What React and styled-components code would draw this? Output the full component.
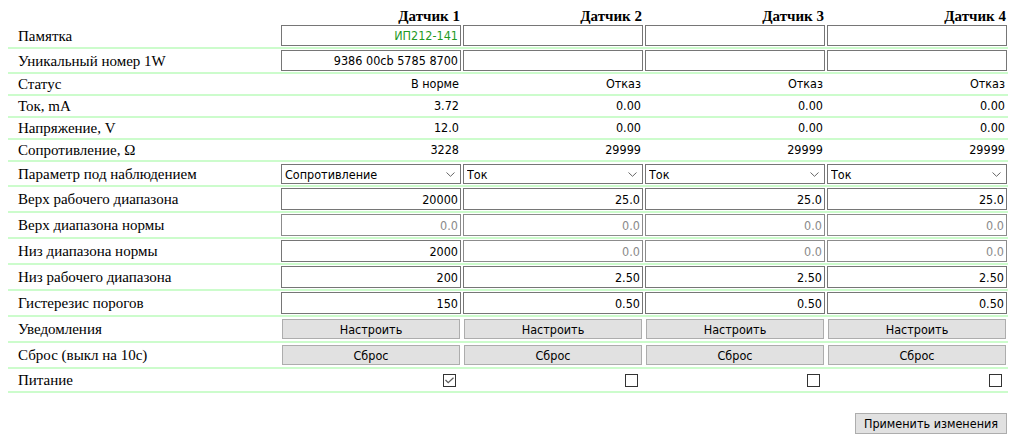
import React from "react";
import styled, { createGlobalStyle } from "styled-components";

const GlobalStyle = createGlobalStyle`
  body {
    margin: 8px;
    background: #fff;
    font-family: "Liberation Serif", "Times New Roman", serif;
    font-size: 15px;
    color: #000;
  }
`;

const sans = `"DejaVu Sans Condensed", "DejaVu Sans", Tahoma, sans-serif`;

const sensors = [
  {
    memo: "ИП212-141",
    uid: "9386 00cb 5785 8700",
    status: "В норме",
    current: "3.72",
    voltage: "12.0",
    resistance: "3228",
    param: "Сопротивление",
    workTop: "20000",
    normTop: "0.0",
    normBottom: "2000",
    workBottom: "200",
    hyst: "150",
    power: true,
    off: { normTop: true },
  },
  ...[1, 2, 3].map(() => ({
    memo: "",
    uid: "",
    status: "Отказ",
    current: "0.00",
    voltage: "0.00",
    resistance: "29999",
    param: "Ток",
    workTop: "25.0",
    normTop: "0.0",
    normBottom: "0.0",
    workBottom: "2.50",
    hyst: "0.50",
    power: false,
    off: { normTop: true, normBottom: true },
  })),
];

const Table = styled.table`
  width: 1000px;
  border-collapse: separate;
  border-spacing: 0;
  table-layout: fixed;
`;

const Label = styled.td`
  padding: 1px 1px 1px 10px;
  line-height: 18px;
  white-space: nowrap;
  border-bottom: 2px solid #ccfccc;
`;

const Head = styled.th`
  text-align: right;
  vertical-align: bottom;
  padding: 0 2px 0 0;
  font-weight: bold;
  height: 16px;
  line-height: 16px;
`;

const Cell = styled.td`
  padding: 1px;
  text-align: right;
  border-bottom: 2px solid #ccfccc;
`;

const Value = styled.td`
  padding: 1px 3px 1px 1px;
  text-align: right;
  line-height: 18px;
  font-family: ${sans};
  font-stretch: condensed;
  font-size: 12.5px;
  border-bottom: 2px solid #ccfccc;
`;

const Field = styled.input`
  box-sizing: border-box;
  display: block;
  width: 100%;
  height: ${(p) => (p.$short ? "21px" : "22px")};
  margin: 0;
  padding: 0 2px;
  border: 1px solid ${(p) => (p.disabled ? "#8c8c8c" : "#767676")};
  outline: none;
  text-align: right;
  font-family: ${sans};
  font-stretch: condensed;
  font-size: 12.5px;
  color: ${(p) => (p.$green ? "#1f9a1f" : p.disabled ? "#8a8a8a" : "#000")};
  -webkit-text-fill-color: ${(p) => (p.$green ? "#1f9a1f" : p.disabled ? "#8a8a8a" : "#000")};
  opacity: 1;
  background: #fff;
`;

const SelectWrap = styled.div`
  position: relative;
  height: 20px;
  margin: 1px 0 0;
`;

const Select = styled.select`
  box-sizing: border-box;
  display: block;
  width: 100%;
  height: 20px;
  margin: 0;
  padding: 0 20px 0 3px;
  border: 1px solid #767676;
  border-radius: 0;
  appearance: none;
  background: #fff;
  font-family: ${sans};
  font-stretch: condensed;
  font-size: 12.5px;
  color: #000;
`;

const Chevron = styled.svg`
  position: absolute;
  right: 6px;
  top: 8px;
  pointer-events: none;
`;

const Button = styled.button`
  box-sizing: border-box;
  display: block;
  width: ${(p) => p.$w || "calc(100% - 2px)"};
  height: ${(p) => p.$h || "20px"};
  margin: ${(p) => (p.$w ? "0" : "1px")};
  padding: 0;
  border: 1px solid #adadad;
  border-radius: 0;
  background: #e1e1e1;
  font-family: ${sans};
  font-stretch: condensed;
  font-size: 12.5px;
  color: #000;
`;

const Box = styled.span`
  display: inline-block;
  box-sizing: border-box;
  width: 13px;
  height: 13px;
  margin: 4px 5px 3px 0;
  border: 1px solid #333;
  background: #fff;
  vertical-align: middle;
`;

const Footer = styled.div`
  width: 999px;
  display: flex;
  justify-content: flex-end;
  padding-top: 20px;
`;

function Check({ on }) {
  return (
    <Box>
      {on && (
        <svg width="11" height="11" viewBox="0 0 11 11" style={{ display: "block" }}>
          <path d="M1.5 5 L4.2 7.7 L9.5 2.8" fill="none" stroke="#5a5a5a" strokeWidth="1.2" />
        </svg>
      )}
    </Box>
  );
}

function InputRow({ label, field, short }) {
  return (
    <tr>
      <Label>{label}</Label>
      {sensors.map((s, i) => (
        <Cell key={i}>
          <Field
            readOnly
            disabled={!!s.off[field]}
            defaultValue={s[field]}
            $green={field === "memo"}
            $short={short}
          />
        </Cell>
      ))}
    </tr>
  );
}

function ValueRow({ label, field }) {
  return (
    <tr>
      <Label>{label}</Label>
      {sensors.map((s, i) => (
        <Value key={i}>{s[field]}</Value>
      ))}
    </tr>
  );
}

function ButtonRow({ label, text }) {
  return (
    <tr>
      <Label>{label}</Label>
      {sensors.map((_, i) => (
        <Cell key={i}>
          <Button>{text}</Button>
        </Cell>
      ))}
    </tr>
  );
}

export default function App() {
  return (
    <>
      <GlobalStyle />
      <Table>
        <colgroup>
          <col style={{ width: 272 }} />
          <col style={{ width: 182 }} />
          <col style={{ width: 182 }} />
          <col style={{ width: 182 }} />
          <col style={{ width: 182 }} />
        </colgroup>
        <tbody>
          <tr>
            <th />
            {sensors.map((_, i) => (
              <Head key={i}>Датчик {i + 1}</Head>
            ))}
          </tr>
          <InputRow label="Памятка" field="memo" short />
          <InputRow label="Уникальный номер 1W" field="uid" short />
          <ValueRow label="Статус" field="status" />
          <ValueRow label="Ток, mA" field="current" />
          <ValueRow label="Напряжение, V" field="voltage" />
          <ValueRow label="Сопротивление, Ω" field="resistance" />
          <tr>
            <Label>Параметр под наблюдением</Label>
            {sensors.map((s, i) => (
              <Cell key={i}>
                <SelectWrap>
                  <Select defaultValue={s.param}>
                    <option>Сопротивление</option>
                    <option>Ток</option>
                    <option>Напряжение</option>
                  </Select>
                  <Chevron width="9" height="5" viewBox="0 0 9 5">
                    <path d="M0.5 0.5 L4.5 4.3 L8.5 0.5" fill="none" stroke="#666" strokeWidth="1" />
                  </Chevron>
                </SelectWrap>
              </Cell>
            ))}
          </tr>
          <InputRow label="Верх рабочего диапазона" field="workTop" />
          <InputRow label="Верх диапазона нормы" field="normTop" />
          <InputRow label="Низ диапазона нормы" field="normBottom" />
          <InputRow label="Низ рабочего диапазона" field="workBottom" />
          <InputRow label="Гистерезис порогов" field="hyst" />
          <ButtonRow label="Уведомления" text="Настроить" />
          <ButtonRow label="Сброс (выкл на 10с)" text="Сброс" />
          <tr>
            <Label>Питание</Label>
            {sensors.map((s, i) => (
              <Cell key={i}>
                <Check on={s.power} />
              </Cell>
            ))}
          </tr>
        </tbody>
      </Table>
      <Footer>
        <Button $w="152px" $h="21px">Применить изменения</Button>
      </Footer>
    </>
  );
}
